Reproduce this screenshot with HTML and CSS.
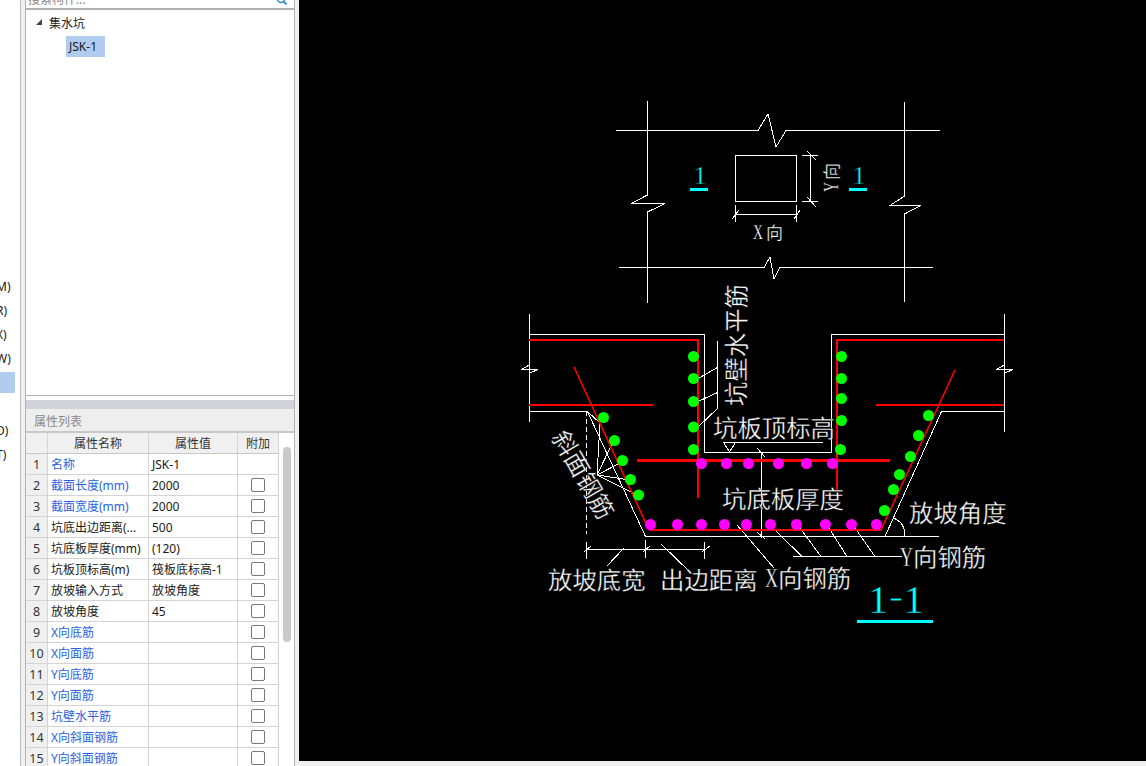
FILE: index.html
```html
<!DOCTYPE html>
<html lang="zh-CN">
<head>
<meta charset="utf-8">
<title>集水坑</title>
<link rel="stylesheet" href="styles.css">
</head>
<body>
<div class="app">
  <nav class="nav">
    <div class="nav-item">M)</div>
    <div class="nav-item">R)</div>
    <div class="nav-item">X)</div>
    <div class="nav-item">W)</div>
    <div class="nav-item nav-active"></div>
    <div class="nav-item"></div>
    <div class="nav-item">D)</div>
    <div class="nav-item">T)</div>
  </nav>
  <aside class="panel">
    <div class="search">
      <span class="search-text">搜索构件...</span>
      <svg class="search-icon" width="10" height="6" viewBox="0 0 10 6"><circle cx="4" cy="-1" r="3.5" fill="none" stroke="#3d8fc4" stroke-width="1.5"/><path d="M6.5 1.5L9.5 4.5" stroke="#3d8fc4" stroke-width="2"/></svg>
    </div>
    <div class="tree">
      <div class="tree-root"><span class="tree-arrow"></span><span>集水坑</span></div>
      <div class="tree-leaf"><span class="tree-selected">JSK-1</span></div>
    </div>
    <div class="splitter"></div>
    <div class="props-title">属性列表</div>
    <div class="props">
      <div class="grid">
        <div class="row head"><div class="c num"></div><div class="c center">属性名称</div><div class="c center">属性值</div><div class="c center">附加</div></div>
        <div class="row"><div class="c num">1</div><div class="c name link">名称</div><div class="c val">JSK-1</div><div class="c add"></div></div>
        <div class="row"><div class="c num">2</div><div class="c name link">截面长度(mm)</div><div class="c val">2000</div><div class="c add"><span class="check"></span></div></div>
        <div class="row"><div class="c num">3</div><div class="c name link">截面宽度(mm)</div><div class="c val">2000</div><div class="c add"><span class="check"></span></div></div>
        <div class="row"><div class="c num">4</div><div class="c name">坑底出边距离(...</div><div class="c val">500</div><div class="c add"><span class="check"></span></div></div>
        <div class="row"><div class="c num">5</div><div class="c name">坑底板厚度(mm)</div><div class="c val">(120)</div><div class="c add"><span class="check"></span></div></div>
        <div class="row"><div class="c num">6</div><div class="c name">坑板顶标高(m)</div><div class="c val">筏板底标高-1</div><div class="c add"><span class="check"></span></div></div>
        <div class="row"><div class="c num">7</div><div class="c name">放坡输入方式</div><div class="c val">放坡角度</div><div class="c add"><span class="check"></span></div></div>
        <div class="row"><div class="c num">8</div><div class="c name">放坡角度</div><div class="c val">45</div><div class="c add"><span class="check"></span></div></div>
        <div class="row"><div class="c num">9</div><div class="c name link">X向底筋</div><div class="c val"></div><div class="c add"><span class="check"></span></div></div>
        <div class="row"><div class="c num">10</div><div class="c name link">X向面筋</div><div class="c val"></div><div class="c add"><span class="check"></span></div></div>
        <div class="row"><div class="c num">11</div><div class="c name link">Y向底筋</div><div class="c val"></div><div class="c add"><span class="check"></span></div></div>
        <div class="row"><div class="c num">12</div><div class="c name link">Y向面筋</div><div class="c val"></div><div class="c add"><span class="check"></span></div></div>
        <div class="row"><div class="c num">13</div><div class="c name link">坑壁水平筋</div><div class="c val"></div><div class="c add"><span class="check"></span></div></div>
        <div class="row"><div class="c num">14</div><div class="c name link">X向斜面钢筋</div><div class="c val"></div><div class="c add"><span class="check"></span></div></div>
        <div class="row"><div class="c num">15</div><div class="c name link">Y向斜面钢筋</div><div class="c val"></div><div class="c add"><span class="check"></span></div></div>
      </div>
      <div class="scroll"><div class="thumb"></div></div>
    </div>
  </aside>
  <main class="canvas">
    <svg class="cad" width="847" height="761" viewBox="299 0 847 761">
      <g class="wire">
        <!-- plan -->
        <path d="M616 130.5H758L768 114L776 147L786 130.5H940"/>
        <path d="M619 267.5H764L770 257L774 279L780 267.5H933"/>
        <path d="M647.5 101V195L631 203.5H665L647.5 212V303"/>
        <path d="M904.5 102V196L890 205.5H921L904.5 214V302"/>
        <path d="M735.5 155.5H796.5V201.5H735.5Z"/>
        <path d="M810.5 155.5V201.5M802 155.5H818M802 201.5H818M807 151L816 160M807 197L816 207"/>
        <path d="M735.5 214.5H796.5M735.5 205V222M796.5 205V222M732 219L739 210M794 219L800 210"/>
        <!-- section outline -->
        <path d="M529.5 314V422M521 369.5H538L530 373M529.5 365L521 369.5"/>
        <path d="M1004.5 314V432M996 369.5H1013L1005 373M1004.5 365L996 369.5"/>
        <path d="M529 334.5H704.5V452.5H831.5V334.5H1004"/>
        <path d="M529 411.5H587.5L645.5 536.5H939M885 536.5L941.5 411.5H1004"/>
        <path d="M893 518Q905 522 905 536"/>
        <!-- leaders -->
        <path d="M717.5 341V408.5M717.5 367.5L698 378.5M717.5 392.5L698 401.5M717.5 408.5L698 427"/>
        <path d="M723 442.5H823M723.5 442.5L729.5 452L735.5 442.5"/>
        <path d="M761.5 452V538M757 448L765 457M757 532L765 539"/>
        <path d="M597 475L600 423L587.5 411.5M597 475L613 442M597 475L622 462M597 475L630 480M597 475L637 495"/>
        <path class="dash" d="M586.5 411V534"/>
        <path d="M586.5 549.5H704.5M586.5 542V559M645.5 540V558M704.5 542V559M584 552L591 546M643 552L650 546M702 552L710 546"/>
        <path d="M624 548L607 566M661 544L690 572M737 525L774 568"/>
        <path d="M793 556.5H902M774 529L802 556.5M800 528L821 556.5M829 528L847 556.5M855 528L875 556.5"/>
      </g>
      <g class="rebar">
        <path d="M529 340H698V498M1004 340H837V491M529 405H653M876 405H1004M637 460.5H890M649 530H881"/>
        <path class="thin" d="M574 367L649 530M881 530L955 370"/>
      </g>
      <g class="green">
        <circle cx="693.5" cy="356.5" r="5.5"/><circle cx="693.5" cy="378.5" r="5.5"/><circle cx="693.5" cy="401.5" r="5.5"/><circle cx="693.5" cy="427" r="5.5"/><circle cx="693.5" cy="449.5" r="5.5"/>
        <circle cx="841.5" cy="356.5" r="5.5"/><circle cx="841.5" cy="378.5" r="5.5"/><circle cx="841.5" cy="398.5" r="5.5"/><circle cx="841.5" cy="420.5" r="5.5"/><circle cx="840.5" cy="449.5" r="5.5"/>
        <circle cx="603.5" cy="417.5" r="5.5"/><circle cx="614.5" cy="440.5" r="5.5"/><circle cx="622.5" cy="460.5" r="5.5"/><circle cx="630.5" cy="479.5" r="5.5"/><circle cx="638.5" cy="495" r="5.5"/>
        <circle cx="928.5" cy="415.5" r="5.5"/><circle cx="918.5" cy="435.5" r="5.5"/><circle cx="910.5" cy="456.5" r="5.5"/><circle cx="899.5" cy="474.5" r="5.5"/><circle cx="893.5" cy="489.5" r="5.5"/><circle cx="884.5" cy="510.5" r="5.5"/>
      </g>
      <g class="magenta">
        <circle cx="701.5" cy="463.5" r="5.5"/><circle cx="726.5" cy="463.5" r="5.5"/><circle cx="748.5" cy="463.5" r="5.5"/><circle cx="778.5" cy="463.5" r="5.5"/><circle cx="806.5" cy="463.5" r="5.5"/><circle cx="832.5" cy="463.5" r="5.5"/>
        <circle cx="650.5" cy="524.5" r="5.5"/><circle cx="677.5" cy="524.5" r="5.5"/><circle cx="701.5" cy="524.5" r="5.5"/><circle cx="724.5" cy="524.5" r="5.5"/><circle cx="746.5" cy="524.5" r="5.5"/><circle cx="770.5" cy="524.5" r="5.5"/><circle cx="796.5" cy="524.5" r="5.5"/><circle cx="825.5" cy="524.5" r="5.5"/><circle cx="851.5" cy="524.5" r="5.5"/><circle cx="876.5" cy="524.5" r="5.5"/>
      </g>
      <g class="label">
        <text class="sm" x="753" y="239"><tspan class="lat-sm" textLength="10" lengthAdjust="spacingAndGlyphs">X</tspan><tspan dx="3">向</tspan></text>
        <text class="sm" transform="translate(838 192) rotate(-90)"><tspan class="lat-sm" textLength="10" lengthAdjust="spacingAndGlyphs">Y</tspan><tspan dx="2">向</tspan></text>
        <text x="713" y="437">坑板顶标高</text>
        <text x="722" y="507.5">坑底板厚度</text>
        <text x="909" y="522">放坡角度</text>
        <text x="548" y="589">放坡底宽</text>
        <text x="660" y="589">出边距离</text>
        <text x="900" y="566"><tspan class="lat" textLength="13" lengthAdjust="spacingAndGlyphs">Y</tspan>向钢筋</text>
        <text x="765" y="587"><tspan class="lat" textLength="13" lengthAdjust="spacingAndGlyphs">X</tspan>向钢筋</text>
        <text transform="translate(745 406) rotate(-90)">坑壁水平筋</text>
        <text transform="translate(551 437) rotate(60)">斜面钢筋</text>
      </g>
      <g class="title">
        <text class="t-sm" x="700" y="184">1</text>
        <text class="t-sm" x="859" y="184">1</text>
        <text class="t-lg" x="896" y="613">1<tspan class="hy" dy="-4" textLength="15" lengthAdjust="spacingAndGlyphs">-</tspan><tspan dy="4">1</tspan></text>
      </g>
      <g class="bars">
        <rect x="690" y="188" width="18" height="3"/>
        <rect x="849" y="188" width="18" height="3"/>
        <rect x="857" y="620" width="76" height="3"/>
      </g>
    </svg>
  </main>
</div>
</body>
</html>
```

FILE: styles.css
```css
* { box-sizing: border-box; }
html, body { margin: 0; padding: 0; }
body { background: #f0f0f0; font-family: "Noto Sans", "Noto Sans CJK SC", sans-serif; font-size: 12px; color: #1a1a1a; overflow: hidden; }
.app { display: flex; width: 1146px; height: 766px; overflow: hidden; }

.nav { width: 21px; flex: none; background: #fff; border-right: 1px solid #bcbcbc; padding-top: 275px; overflow: hidden; }
.nav-item { height: 24px; line-height: 24px; margin-left: -4px; white-space: nowrap; }
.nav-active { height: 21px; margin-top: 1px; margin-bottom: 2px; margin-left: 0; background: #b0cdf0; margin-right: 5px; }

.panel { width: 270px; margin-left: 4px; flex: none; display: flex; flex-direction: column; background: #fff; border-left: 1px solid #b4b4b4; border-right: 1px solid #b4b4b4; }
.search { height: 10px; border-bottom: 2px solid #b0b0b0; display: flex; justify-content: space-between; overflow: hidden; padding: 0 7px 0 2px; }
.search-text { color: #888; line-height: 12px; margin-top: -6px; }
.search-icon { flex: none; }
.tree { height: 386px; border-bottom: 1px solid #b4b4b4; font-family: "Noto Sans CJK SC", sans-serif; }
.tree-root { display: flex; align-items: center; height: 24px; margin-bottom: 2px; padding-left: 10px; gap: 7px; }
.tree-arrow { width: 0; height: 0; border-style: solid; border-width: 0 0 6px 6px; border-color: transparent transparent #444 transparent; }
.tree-leaf { padding-left: 40px; }
.tree-selected { display: inline-block; height: 21px; line-height: 21px; padding: 0 3px; width: 39px; background: #b0cdf0; font-family: "Noto Sans", sans-serif; white-space: nowrap; }
.splitter { margin-top: 4px; height: 9px; background: #d1d3da; }
.props-title { height: 24px; line-height: 24px; padding-left: 8px; background: #eeeeee; border-bottom: 2px solid #c8c8c8; color: #8a8a8a; font-family: "Noto Sans CJK SC", sans-serif; }
.props { flex: 1; display: flex; min-height: 0; overflow: hidden; }
.grid { width: 253px; flex: none; }
.row { display: grid; grid-template-columns: 22px 101px 89px 41px; height: 21px; border-bottom: 1px solid #d4d4d4; line-height: 22px; white-space: nowrap; }
.c { border-right: 1px solid #d4d4d4; overflow: hidden; padding-left: 3px; }
.num { background: #f0f0f0; color: #333; text-align: center; padding-left: 0; font-size: 12.5px; }
.head .c { background: #f0f0f0; color: #333; }
.head { border-bottom-color: #c8c8c8; }
.center { text-align: center; padding-left: 0; }
.link { color: #2a62e0; }
.add { display: flex; align-items: center; justify-content: center; padding: 0; }
.check { width: 14px; height: 14px; border: 1px solid #777; border-radius: 2px; background: #fff; }
.scroll { flex: 1; padding: 14px 3px 0 4px; }
.thumb { width: 8px; height: 195px; border-radius: 4px; background: #c9c9c9; }

.canvas { margin-left: 4px; width: 847px; height: 761px; background: #000; flex: none; }
.cad { display: block; }
.wire path { fill: none; stroke: #fff; stroke-width: 1; shape-rendering: crispEdges; }
.wire .dash { stroke-dasharray: 5 3; }
.rebar path { fill: none; stroke: #f00; stroke-width: 2.5; shape-rendering: crispEdges; }
.rebar .thin { stroke-width: 1.6; shape-rendering: auto; }
.green { fill: #0f0; }
.magenta { fill: #f0f; }
.bars { fill: #0ff; }
.label text { font-family: "Noto Sans CJK SC", sans-serif; font-size: 24.4px; fill: #fff; stroke: #000; stroke-width: .35px; }
.label .sm { font-size: 17px; stroke-width: .25px; }
.label .lat { font-family: "Liberation Serif", serif; font-size: 27px; }
.label .lat-sm { font-family: "Liberation Serif", serif; font-size: 20px; }
.title text { font-family: "Liberation Serif", serif; fill: #0ff; text-anchor: middle; stroke: #000; stroke-width: .4px; }
.title .t-sm { font-size: 26px; }
.title .t-lg { font-size: 41px; }
.title .hy { stroke-width: 1.2px; }
```
